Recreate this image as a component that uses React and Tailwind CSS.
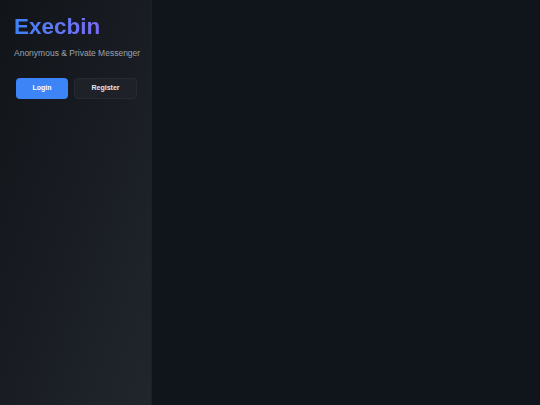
import React from "react";

export default function App() {
  return (
    <div
      className="flex h-[405px] w-[540px] bg-[#10141b]"
      style={{ fontFamily: '"Liberation Sans", Arial, sans-serif' }}
    >
      {/* Sidebar */}
      <aside className="w-[152px] shrink-0 border-r border-[#1b1f26] bg-gradient-to-br from-[#111419] to-[#21262d] pl-[14px] pr-[8px] pt-[16px]">
        <h1 className="bg-gradient-to-r from-[#3b82f6] to-[#8b5cf6] bg-clip-text text-[22.5px] font-bold leading-none text-transparent">
          Execbin
        </h1>
        <p className="mt-[10px] whitespace-nowrap text-[8.5px] leading-none text-[#9ca3af]">
          Anonymous &amp; Private Messenger
        </p>
        <div className="mt-[21px] flex gap-[6px] pl-[2px]">
          <button className="flex h-[21px] w-[52px] items-center justify-center rounded-[4px] bg-[#3d84f6] text-[7px] font-bold text-white">
            Login
          </button>
          <button className="flex h-[21px] w-[63px] items-center justify-center rounded-[4px] border border-[#262a31] bg-[#1e2228] text-[7px] font-bold text-[#e5e7eb]">
            Register
          </button>
        </div>
      </aside>

      {/* Main */}
      <main className="flex-1" />
    </div>
  );
}
